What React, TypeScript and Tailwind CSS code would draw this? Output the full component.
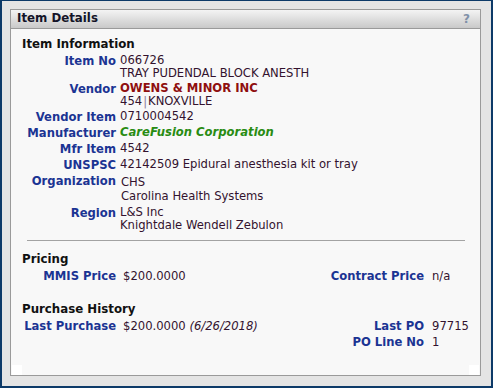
import React from "react";

type Row = { label: string; lines: React.ReactNode[]; org?: boolean };

const rows: Row[] = [
  { label: "Item No", lines: ["066726", "TRAY PUDENDAL BLOCK ANESTH"] },
  {
    label: "Vendor",
    lines: [
      <span className="font-bold text-[#8f0f0f]">OWENS &amp; MINOR INC</span>,
      <span>
        454<span className="text-[#8a7a9a] mx-[1px]">|</span>KNOXVILLE
      </span>,
    ],
  },
  { label: "Vendor Item", lines: ["0710004542"] },
  {
    label: "Manufacturer",
    lines: [<span className="font-bold italic text-[#288c12]">CareFusion Corporation</span>],
  },
  { label: "Mfr Item", lines: ["4542"] },
  { label: "UNSPSC", lines: ["42142509 Epidural anesthesia kit or tray"] },
  { label: "Organization", lines: ["CHS", "Carolina Health Systems"], org: true },
  { label: "Region", lines: ["L&S Inc", "Knightdale Wendell Zebulon"] },
];

const Label = ({ children, className = "" }: { children: React.ReactNode; className?: string }) => (
  <div className={`font-bold text-[#1b3493] text-right leading-[14px] whitespace-nowrap ${className}`}>{children}</div>
);

export default function App() {
  return (
    <div className="w-[493px] h-[388px] bg-[#e4e4e4] border-[#0d3a68] border-t border-x-2 border-b-2 pt-[8px] pl-[8px] pr-[10px] pb-[10px] font-['DejaVu_Sans',sans-serif] text-[11.6px] text-[#33122e]">
      <div className="h-full border border-[#9a9a9a] bg-[#f8f8f8] flex flex-col">
        {/* header */}
        <div className="h-[19px] shrink-0 flex items-center justify-between pl-[6px] pr-[10px] border-b border-[#9a9a9a] bg-gradient-to-b from-[#f4f4f4] to-[#c9c9c9]">
          <span className="font-bold text-[11.8px] text-[#141428]">Item Details</span>
          <span className="font-bold text-[12px] text-[#8090a8]">?</span>
        </div>

        {/* body */}
        <div className="flex-1 flex flex-col pl-[11px] pr-[15px] pt-[8px]">
          <div className="font-bold text-[11.8px] leading-[14px] text-[#111]">Item Information</div>
          <div className="mt-[2px] flex flex-col">
            {rows.map((r) => (
              <div key={r.label} className="flex py-[1px]">
                <Label className="w-[94px] shrink-0">{r.label}</Label>
                <div className={`ml-[4px] ${r.org ? "leading-[14px] pl-[1px] pt-[1px] pb-[1px]" : "leading-[13px]"}`}>
                  {r.lines.map((l, i) => (
                    <div key={i} className="whitespace-nowrap">{l}</div>
                  ))}
                </div>
              </div>
            ))}
          </div>

          <div className="mt-[7px] ml-[5px] h-px bg-[#a3a3a3]" />

          <div className="mt-[11px] font-bold text-[11.8px] leading-[14px] text-[#111]">Pricing</div>
          <div className="mt-[2px] py-[1px] flex items-start justify-between">
            <div className="flex">
              <Label className="w-[94px]">MMIS Price</Label>
              <span className="ml-[7px] leading-[14px]">$200.0000</span>
            </div>
            <div className="flex">
              <Label>Contract Price</Label>
              <span className="ml-[8px] w-[33px] leading-[14px]">n/a</span>
            </div>
          </div>

          <div className="mt-[18px] font-bold text-[11.8px] leading-[14px] text-[#111]">Purchase History</div>
          <div className="mt-[2px] py-[1px] flex items-start justify-between">
            <div className="flex">
              <Label className="w-[94px]">Last Purchase</Label>
              <span className="ml-[7px] leading-[14px]">
                $200.0000 <span className="italic">(6/26/2018)</span>
              </span>
            </div>
            <div className="flex">
              <Label>Last PO</Label>
              <span className="ml-[8px] w-[33px] leading-[14px]">97715</span>
            </div>
          </div>
          <div className="py-[1px] flex justify-end">
            <Label>PO Line No</Label>
            <span className="ml-[8px] w-[33px] leading-[14px]">1</span>
          </div>
        </div>

        {/* footer corners */}
        <div className="h-[10px] shrink-0 flex justify-between px-[1px]">
          <div className="w-[10px] h-[10px] bg-white" />
          <div className="w-[10px] h-[10px] bg-white" />
        </div>
      </div>
    </div>
  );
}
